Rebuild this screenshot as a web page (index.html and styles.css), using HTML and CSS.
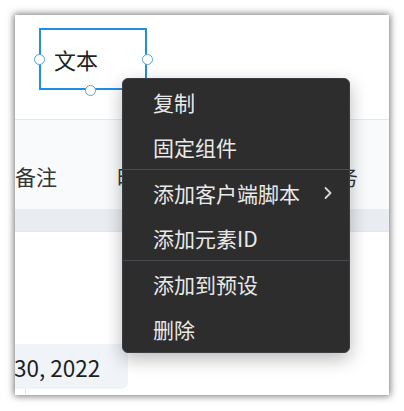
FILE: index.html
```html
<!DOCTYPE html>
<html lang="zh">
<head>
<meta charset="utf-8">
<link rel="stylesheet" href="styles.css">
</head>
<body>
<div class="frame">
  <div class="panel">
    <div class="canvas-top">
      <div class="textbox">
        <span class="tb-text">文本</span>
        <span class="handle h-left"></span>
        <span class="handle h-right"></span>
        <span class="handle h-bottom"></span>
      </div>
    </div>
    <div class="head-row">
      <span class="col c1">备注</span>
      <span class="col c2">时间</span>
      <span class="col c3">任务</span>
    </div>
    <div class="band"></div>
    <div class="body-area"></div>
    <div class="date-cell"><span class="date-text">30, 2022</span></div>
    <div class="foot"><span class="vline"></span></div>

    <div class="menu">
      <div class="item">复制</div>
      <div class="item">固定组件</div>
      <div class="sep"></div>
      <div class="item has-sub">添加客户端脚本
        <svg class="chev" width="10" height="14" viewBox="0 0 10 14"><path d="M2.5 2 L7.5 7 L2.5 12" fill="none" stroke="#d8d8d8" stroke-width="1.8" stroke-linecap="round" stroke-linejoin="round"/></svg>
      </div>
      <div class="item">添加元素ID</div>
      <div class="sep"></div>
      <div class="item">添加到预设</div>
      <div class="item">删除</div>
    </div>
  </div>
</div>
</body>
</html>
```

FILE: styles.css
```css
html, body {
  margin: 0;
  padding: 0;
  background: #ffffff;
  font-family: "Noto Sans CJK SC", "Noto Sans", sans-serif;
}

.frame {
  padding: 15px;
}

.panel {
  position: relative;
  width: 374px;
  height: 380px;
  background: #ffffff;
  overflow: hidden;
  box-shadow: 0 0 7px 1px rgba(0, 0, 0, 0.55);
}

.canvas-top {
  height: 105px;
  padding: 13px 0 0 24px;
  box-sizing: border-box;
  border-bottom: 1px solid #e4e9ef;
}

.textbox {
  position: relative;
  width: 108px;
  height: 62px;
  box-sizing: border-box;
  border: 2px solid #1f8ee6;
  display: flex;
  align-items: center;
  padding-left: 13px;
}

.tb-text {
  font-size: 22px;
  line-height: 1;
  color: #1f1f1f;
}

.handle {
  position: absolute;
  width: 9px;
  height: 9px;
  border-radius: 50%;
  background: #ffffff;
  border: 1.5px solid #4aa5ee;
}
.h-left { left: -7.5px; top: 23.5px; }
.h-right { right: -7.5px; top: 23.5px; }
.h-bottom { left: 43.5px; bottom: -7.5px; }

.head-row {
  height: 89px;
  background: #f8fafc;
  display: flex;
  align-items: center;
  font-size: 21px;
  line-height: 1;
  color: #333333;
  padding-top: 24px;
  box-sizing: border-box;
}

.col { white-space: nowrap; }
.c1 { margin-left: 0; }
.c2 { margin-left: 60px; color: #3a3a3a; }
.c3 { margin-left: 157px; }

.band {
  height: 23px;
  background: #e9edf1;
  border-bottom: 1px solid #e2e7ec;
  box-sizing: border-box;
}

.body-area {
  height: 112px;
}

.date-cell {
  width: 113px;
  height: 45px;
  background: #f0f4f9;
  border-radius: 0 7px 7px 0;
  display: flex;
  align-items: center;
}

.date-text {
  font-size: 22.5px;
  line-height: 1;
  color: #1f1f1f;
  margin-left: -1px;
  padding-top: 1px;
}

.foot {
  height: 5px;
  padding-left: 10px;
}
.vline {
  display: block;
  width: 1px;
  height: 5px;
  background: #dcdfe3;
}

.menu {
  position: absolute;
  left: 107px;
  top: 63px;
  width: 228px;
  box-sizing: border-box;
  background: #2d2d2d;
  border: 1px solid #3b3d42;
  border-radius: 6px;
  padding: 0 0 1px;
  box-shadow: 0 6px 18px rgba(0, 0, 0, 0.28);
  color: #e9e9e9;
}

.item {
  height: 45px;
  display: flex;
  align-items: center;
  padding-left: 30px;
  padding-top: 2px;
  box-sizing: border-box;
  font-size: 21px;
  line-height: 1;
  white-space: nowrap;
}

.has-sub {
  position: relative;
}
.chev {
  position: absolute;
  left: 200px;
  top: 16px;
}

.sep {
  height: 1px;
  background: #464b53;
}
```
